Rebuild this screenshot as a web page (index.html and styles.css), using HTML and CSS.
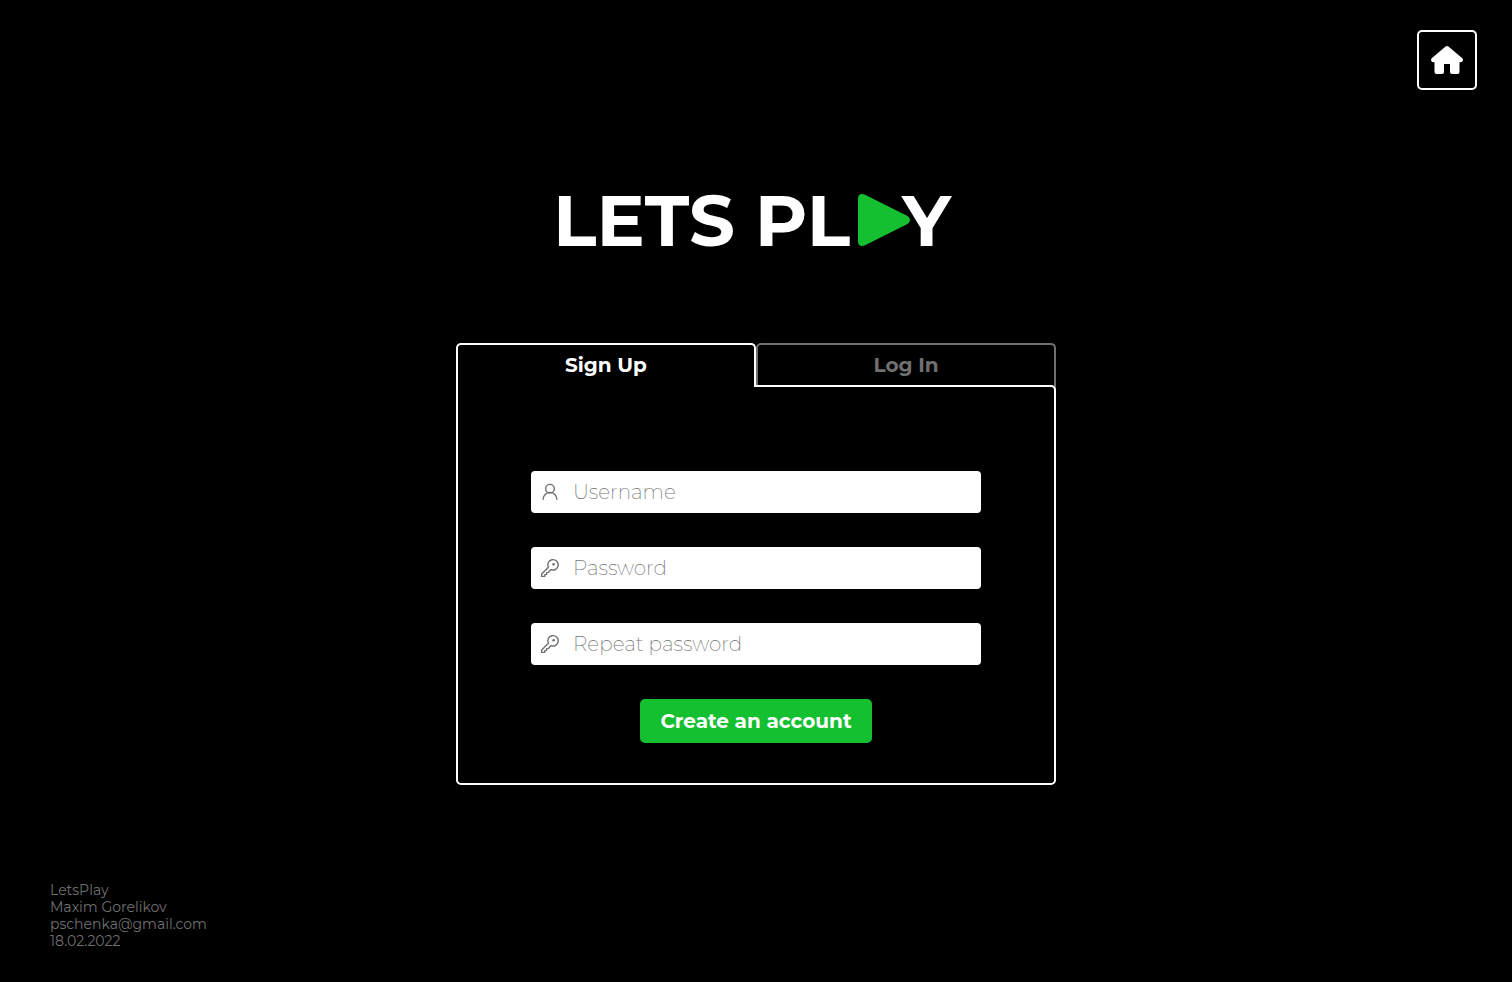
FILE: index.html
```html
<!DOCTYPE html>
<html lang="en">
<head>
<meta charset="utf-8">
<meta name="viewport" content="width=device-width, initial-scale=1">
<title>Lets Play</title>
<link rel="stylesheet" href="styles.css">
</head>
<body>
<svg class="symbols" aria-hidden="true">
  <symbol id="key" viewBox="0 0 20 20">
    <path d="M8.400 9.200 1.600 16v2.400h3.200v-1.800l1.800-.2v-1.800l1.700-.2 2.700-2.800A5.200 5.200 0 1 0 8.400 9.200Z"/>
    <circle class="key-hole" cx="13.600" cy="6.200" r="1.300"/>
  </symbol>
</svg>
<header class="header">
  <a class="home" href="#" aria-label="Home">
    <svg class="home-icon" viewBox="0 0 32 28"><path d="M14.6.6a2.2 2.2 0 0 1 2.8 0L31.300 12.200Q32.300 13.100 31.800 14.800Q31.200 16.300 29.200 16.300H28.500V26Q28.500 28 26.500 28H21Q19 28 19 26V18H13V26Q13 28 11 28H5.500Q3.500 28 3.500 26V16.300H2.800Q.8 16.300.2 14.800Q-.3 13.100.7 12.200Z"/></svg>
  </a>
</header>
<main class="main">
  <h1 class="logo" aria-label="Lets Play">
    <span>LETS</span>
    <span class="logo-word">PL<svg class="play" viewBox="0 0 52 52"><path d="M0 5Q0 0 4 0Q5.500 0 7 .8L49.500 22Q52 23.300 52 26T49.500 30L7 51.200Q5.500 52 4 52Q0 52 0 47Z"/></svg>Y</span>
  </h1>
  <section class="card">
    <div class="tabs" role="tablist">
      <button class="tab tab-active" type="button" role="tab" id="tab-signup" aria-selected="true" aria-controls="signup">Sign Up</button>
      <button class="tab" type="button" role="tab" aria-selected="false">Log In</button>
    </div>
    <form class="panel" id="signup" role="tabpanel" aria-labelledby="tab-signup">
      <label class="field">
        <svg class="field-icon" viewBox="0 0 20 20"><circle cx="10" cy="6.700" r="4.300"/><path d="M3.100 17.300a6.900 6.900 0 0 1 13.800 0"/></svg>
        <input class="input" type="text" placeholder="Username" aria-label="Username">
      </label>
      <label class="field">
        <svg class="field-icon"><use href="#key"/></svg>
        <input class="input" type="password" placeholder="Password" aria-label="Password">
      </label>
      <label class="field">
        <svg class="field-icon"><use href="#key"/></svg>
        <input class="input" type="password" placeholder="Repeat password" aria-label="Repeat password">
      </label>
      <button class="submit" type="submit">Create an account</button>
    </form>
  </section>
</main>
<footer class="footer">
  <p>LetsPlay</p>
  <p>Maxim Gorelikov</p>
  <p>pschenka@gmail.com</p>
  <p>18.02.2022</p>
</footer>
</body>
</html>
```
FILE: styles.css
```css
* {
  box-sizing: border-box;
}

body {
  margin: 0;
  min-height: 100vh;
  display: flex;
  flex-direction: column;
  background: #000;
  color: #fff;
  font-family: Montserrat, Inter, sans-serif;
}

.symbols {
  display: none;
}

.header {
  display: flex;
  justify-content: flex-end;
  padding: 30px 35px 0;
}

.home {
  display: grid;
  place-items: center;
  width: 60px;
  height: 60px;
  border: 2px solid #fff;
  border-radius: 5px;
}

.home-icon {
  width: 32px;
  height: 28px;
  fill: #fff;
}

.main {
  display: flex;
  flex-direction: column;
  align-items: center;
  padding: 0 16px;
}

.logo {
  display: flex;
  gap: 20px;
  margin: 88px 0 81px;
  padding-right: 8px;
  font-size: 72px;
  line-height: 84px;
  font-weight: 700;
}

.logo-word {
  display: flex;
  align-items: center;
}

.play {
  width: 52px;
  height: 52px;
  margin: 0 -8px 0 8px;
  fill: #14c030;
}

.card {
  width: 100%;
  max-width: 600px;
}

.tabs {
  display: flex;
}

.tab {
  flex: 1;
  height: 48px;
  padding: 0 0 6px;
  border: 2px solid #707070;
  border-bottom: 0;
  border-radius: 5px 5px 0 0;
  background: #000;
  color: #707070;
  font: inherit;
  font-size: 20px;
  font-weight: 700;
}

.tab-active {
  position: relative;
  z-index: 2;
  height: 44px;
  padding: 0 0 2px;
  border-color: #fff;
  color: #fff;
}

.panel {
  position: relative;
  z-index: 1;
  display: flex;
  flex-direction: column;
  align-items: center;
  gap: 34px;
  margin-top: -6px;
  padding: 84px 24px 40px;
  border: 2px solid #fff;
  border-radius: 0 5px 5px 5px;
  background: #000;
}

.field {
  display: flex;
  align-items: center;
  gap: 13px;
  width: 100%;
  max-width: 450px;
  height: 42px;
  padding: 0 9px;
  border-radius: 4px;
  background: #fff;
}

.field-icon {
  flex: none;
  width: 20px;
  height: 20px;
  fill: none;
  stroke: #707070;
  stroke-width: 1.4;
  stroke-linejoin: round;
  stroke-linecap: round;
}

.key-hole {
  fill: #707070;
  stroke: none;
}

.input {
  flex: 1;
  min-width: 0;
  height: 100%;
  padding: 0;
  border: 0;
  outline: 0;
  background: none;
  color: #000;
  font: inherit;
  font-size: 20px;
  font-weight: 200;
}

.input::placeholder {
  color: #707070;
  opacity: 1;
}

.submit {
  height: 44px;
  padding: 0 20px;
  border: 0;
  border-radius: 5px;
  background: #14c030;
  color: #fff;
  font: inherit;
  font-size: 20px;
  font-weight: 700;
}

.footer {
  margin-top: auto;
  padding: 24px 50px 32px;
  color: #707070;
  font-size: 14px;
  line-height: 17px;
  font-weight: 400;
}

.footer p {
  margin: 0;
}
```
